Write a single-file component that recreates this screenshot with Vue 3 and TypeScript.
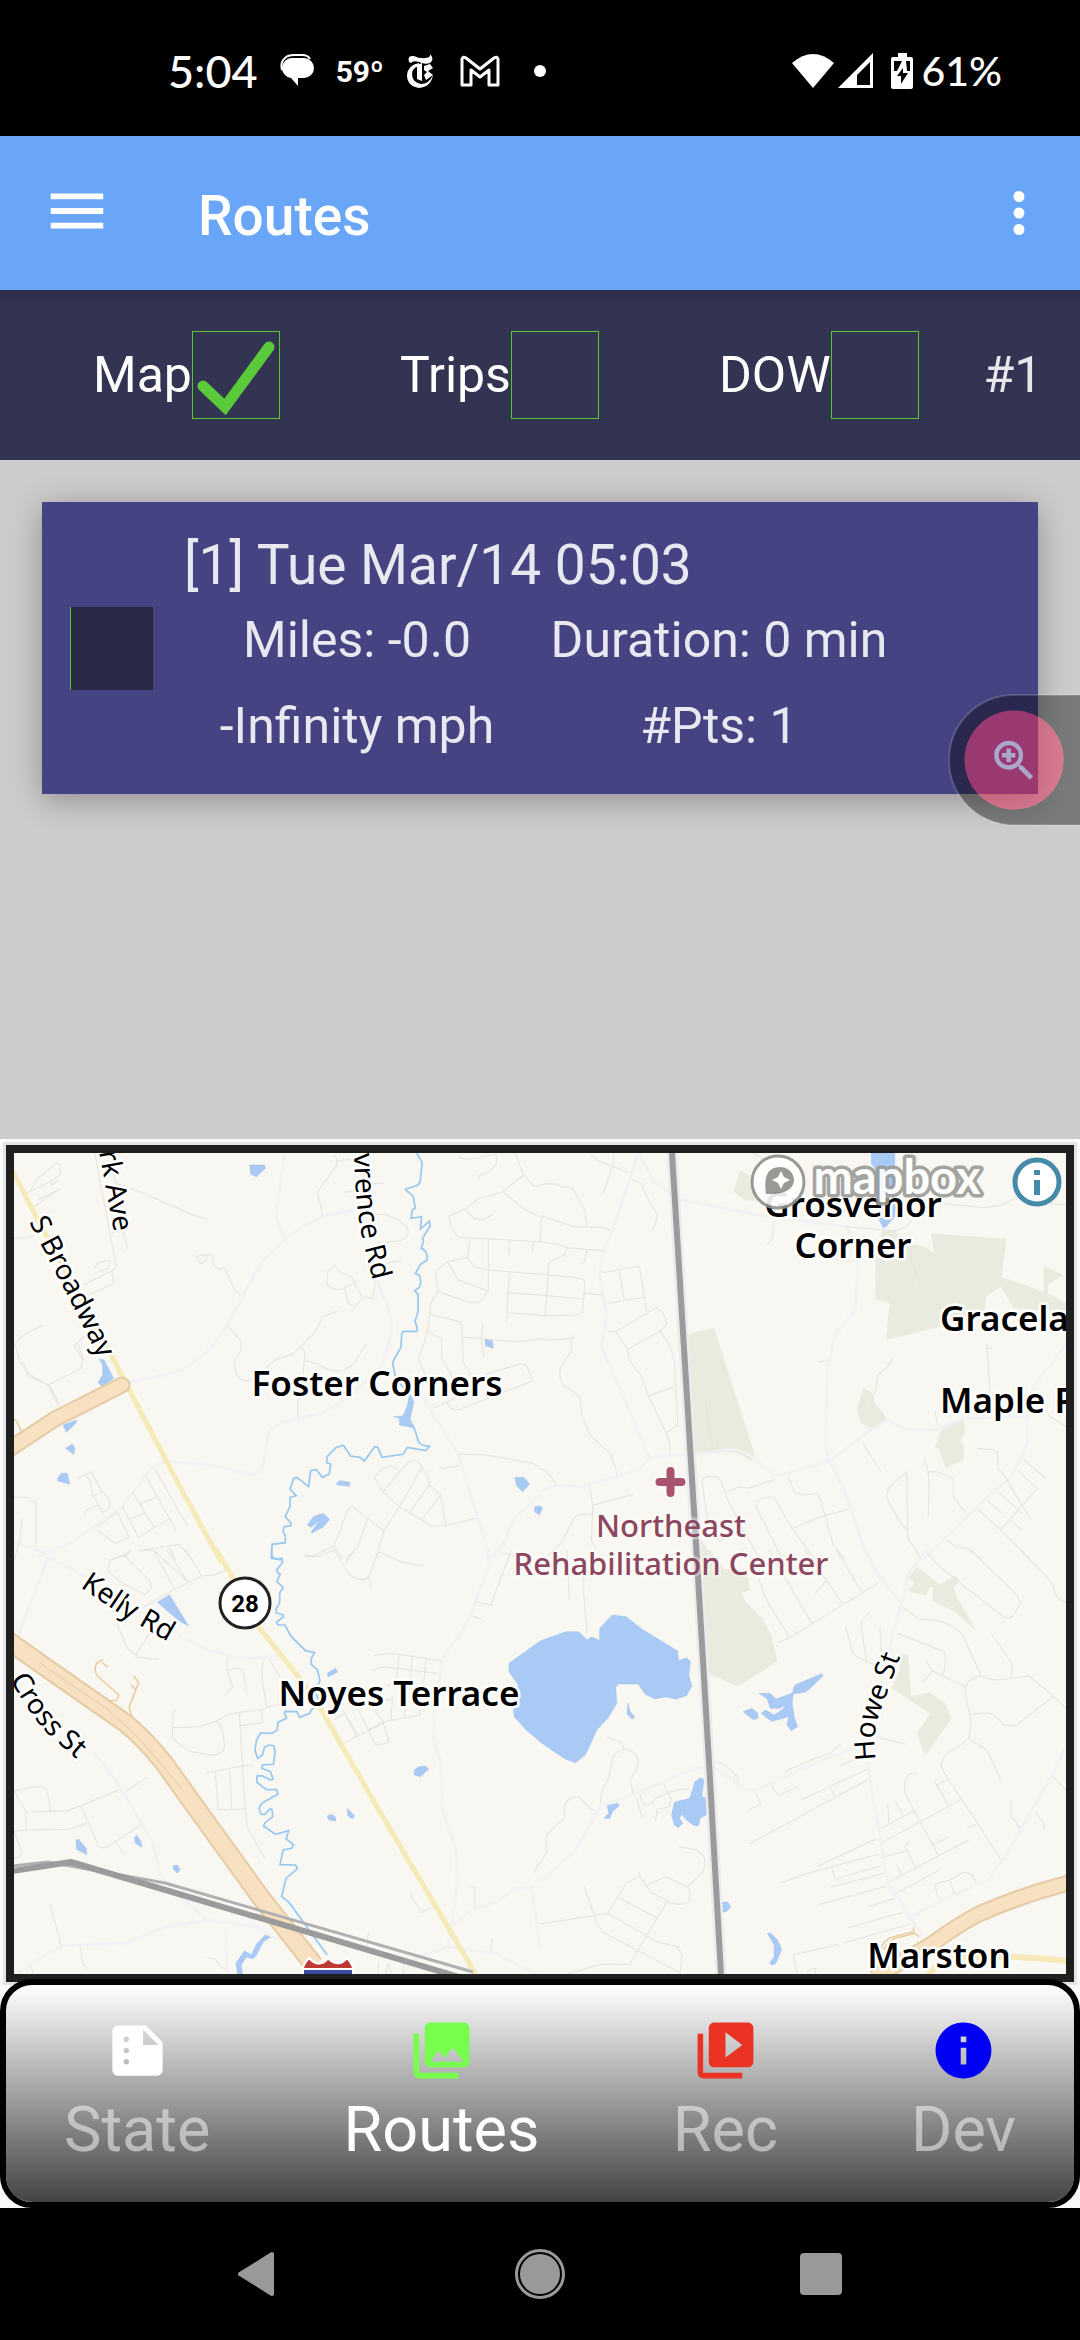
<script setup lang="ts">
import { ref } from 'vue'

interface Filter {
  id: string
  label: string
  on: boolean
}

interface Tab {
  id: string
  label: string
  color: string
  icon: string
}

interface Sheet {
  origin: string
  park: string
  street: string
  lane: string
  river: string
  water: string
  yellow: string
  track: string
}

interface Place {
  text: string
  x: number
  y: number
  anchor: 'start' | 'middle'
}

const filters = ref<Filter[]>([
  { id: 'map', label: 'Map', on: true },
  { id: 'trips', label: 'Trips', on: false },
  { id: 'dow', label: 'DOW', on: false },
])

const selected = ref(false)
const activeTab = ref('routes')

const stats: string[] = ['Miles: -0.0', 'Duration: 0 min', '-Infinity mph', '#Pts: 1']

const tabs: Tab[] = [
  {
    id: 'state',
    label: 'State',
    color: '#ffffff',
    icon: 'M15 3H5c-1.1 0-2 .9-2 2v14c0 1.100.9 2 2 2h14c1.100 0 2-.9 2-2V9l-6-6zM8 17c-.55 0-1-.45-1-1s.45-1 1-1 1 .45 1 1-.45 1-1 1zm0-4c-.55 0-1-.45-1-1s.45-1 1-1 1 .45 1 1-.45 1-1 1zm0-4c-.55 0-1-.45-1-1s.45-1 1-1 1 .45 1 1-.45 1-1 1zm6 1V4.500l5.500 5.500H14z',
  },
  {
    id: 'routes',
    label: 'Routes',
    color: '#76ff4c',
    icon: 'M22 16V4c0-1.100-.9-2-2-2H8c-1.100 0-2 .9-2 2v12c0 1.100.9 2 2 2h12c1.100 0 2-.9 2-2zm-11-4l2.030 2.710L16 11l4 5H8l3-4zM2 6v14c0 1.100.9 2 2 2h14v-2H4V6H2z',
  },
  {
    id: 'rec',
    label: 'Rec',
    color: '#eb3323',
    icon: 'M4 6H2v14c0 1.100.9 2 2 2h14v-2H4V6zm16-4H8c-1.100 0-2 .9-2 2v12c0 1.100.9 2 2 2h12c1.100 0 2-.9 2-2V4c0-1.100-.9-2-2-2zm-8 12.500v-9l6 4.500-6 4.500z',
  },
  {
    id: 'dev',
    label: 'Dev',
    color: '#0000f5',
    icon: 'M12 2C6.480 2 2 6.480 2 12s4.480 10 10 10 10-4.480 10-10S17.520 2 12 2zm1 15h-2v-6h2v6zm0-8h-2V7h2v2z',
  },
]

/* The map is drawn as four survey sheets that share one scale. */
const sheets: Sheet[] = [
  {
    origin: 'translate(-14 -23) scale(.34439 .33333)',
    park: '',
    street:
      'M275 69L335 395Q340 410 330 420L240 465M325 425L330 460L250 500M275 415L282 400L315 390L320 400L315 415L275 430M325 308L358 303L372 362M330 130L360 305M75 190L155 150L175 130V105Q165 95 158 105L105 150L90 180M145 150L150 165L170 150M110 210L175 175L100 230M335 160L400 182L560 255L605 268M41 325L80 323L110 310M125 585L75 610L41 640L60 700L85 740L140 765L170 830M140 765L235 715L240 690L215 645L250 615M225 640L243 690M65 695L85 732L145 770L175 825M663 587L700 635V660L680 695Q680 740 710 752Q730 757 745 735L800 690L850 672L875 648L910 612L938 560L980 543M875 652L885 665L882 715L865 820V865M882 690L925 702Q960 730 1000 720L1027 702L1062 642M570 385L580 375H615L622 408L635 417L655 415L680 480L698 497M570 385L583 402L600 390V375M965 80Q980 70 978 105L922 185L937 257M978 92L1020 88M1000 187L1030 182M1060 160H1115M1090 252Q1140 250 1180 290Q1195 315 1165 332L1095 338M950 425L970 405L985 425L1020 440L1050 500L1083 505L1090 450M950 425V462Q960 480 990 478L1045 452M1000 475L1012 520L1030 530L1052 505M1120 400L1170 392M1332 80Q1340 90 1380 85L1440 72L1442 100L1425 122L1390 138V150M1495 69L1520 135L1550 168H1568M1520 135L1460 185L1440 192L1390 205L1350 238L1303 258L1310 290L1330 322L1568 335M1350 238L1378 267H1405L1430 255M1460 185L1525 240L1568 260M1365 325L1358 385L1380 412L1418 420L1568 433M1418 325V480L1395 515L1365 518L1272 485L1250 522L1248 555L1240 610L1215 690L1240 745M1272 485L1265 425L1300 395L1360 380M1300 395L1330 450L1415 482M1478 330V375M1550 335L1545 365M1480 425L1470 575M1478 488L1568 495M1475 548L1568 555M1248 553L1335 575L1342 590L1345 695L1375 750M1245 607L1282 625V685L1330 770M1345 622L1420 628L1500 635L1568 628M1402 580L1398 630L1405 680M1375 745L1510 702L1528 705L1548 755M1258 835L1300 815L1350 790M1295 815L1310 835L1330 840L1540 755M1332 972L1410 975L1540 998L1568 1010M1275 1012L1290 1015L1332 1006M1088 1040Q1115 1005 1135 1008Q1150 1010 1160 1025M1088 1040L1110 1085L1160 1130L1225 1170L1250 1188L1295 1187L1380 1165M1160 1025L1195 988Q1215 990 1225 1012L1245 1045L1247 1065L1280 1095L1295 1187M1113 1085L1160 1025M1160 1130L1225 1012M1190 1145L1247 1065M1225 1168L1280 1095M970 1247L1010 1140L1023 1130L1068 1165L1115 1203L1090 1290M1068 1165L1040 1250L1003 1290M970 1247L995 1290M885 1277L905 1280L970 1247M1160 1130L1115 1203M41 1102H80L104 1118V1250M65 1163L58 1230L41 1290M223 1047L265 1025L290 1075L318 1110V1135L300 1148L270 1100L262 1050L245 1035M247 1155L250 1140L285 1125M270 1100L300 1085M425 1040L512 1203M450 1018L545 1190M385 1087L447 1193M355 1130L402 1222L495 1165M375 1168L420 1150L408 1120L460 1100M282 1190L340 1147L375 1222L335 1240L282 1200M320 1290L370 1275L380 1265M405 1263L520 1243L560 1290M490 1250L510 1290',
    lane:
      'M828 69L802 240Q802 290 830 328Q870 290 937 260L1060 232M830 328Q755 390 735 440L660 587Q600 690 500 730L370 757M1090 440L1128 535Q1142 580 1135 620L1105 715L1000 810L935 850L860 868Q800 880 780 905L768 980Q762 1030 735 1035L610 1005L500 995Q440 1000 430 1025L355 1130L210 1235L110 1280M1225 800L1330 970L1425 1290M41 1240L140 1270M1568 1095L1490 1170L1460 1245L1425 1290',
    river:
      'M1210 69L1226 98L1220 155L1214 165L1177 178L1200 200L1206 235L1197 240L1194 265L1224 260L1221 297L1247 273L1249 288L1227 325L1230 333L1223 355L1235 362L1241 380L1240 390L1222 402L1206 430L1219 437L1222 455L1218 472L1204 482L1214 493V545L1205 573L1212 597L1210 604H1172L1167 608L1164 652L1140 697L1150 750L1190 790L1185 860L1205 900L1215 935L1225 945L1247 949L1236 962L1183 952L1170 973L1109 982L1097 952L1088 950L1058 993L1045 982L1018 978L997 946L975 953L950 980L948 998L960 1002L956 1032L936 1042L918 1018L902 1022L896 1070L863 1043L853 1045L842 1077L860 1097L842 1102V1130L828 1160L845 1180V1187L825 1190L822 1205L829 1218L828 1238L790 1243L788 1285L818 1290',
    water:
      'M725 105H768L771 115L745 140L728 133ZM288 687L302 690L330 745L295 770L285 757L298 735V705ZM1190 790L1202 815L1188 880L1205 895L1160 885V865L1142 860L1170 858L1183 825ZM183 885L222 870L220 880L193 907ZM190 955L210 942L218 955L214 973ZM167 1045L178 1030L195 1030L203 1063L168 1053ZM1408 628L1430 632L1432 655L1410 647ZM978 1060L985 1052L1015 1056V1069L977 1064ZM892 1185L910 1160L938 1150L957 1168L940 1190L905 1210V1203L930 1170L903 1192ZM1495 1042H1520L1538 1062L1517 1085L1500 1067ZM1552 1130L1568 1128V1155L1552 1145Z',
    yellow: 'M35 120L105 260L330 690L530 1085L645 1300',
    track: 'M41 866Q55 880 62 908',
  },
  {
    origin: 'translate(526 -23) scale(.34439 .33333)',
    park:
      'M425 622L450 607L505 593L625 978L615 992L565 965L445 970ZM582 120L610 140L660 170L655 215L595 210L562 185ZM993 302L1030 300L1050 330L1115 350L1145 368L1135 310L1355 327L1340 440L1463 487V408L1520 435L1475 465V490L1527 520V545L1375 535L1338 470L1295 500L1290 560L1160 590L1005 630L1015 520L975 508L973 390ZM938 773L965 790L970 815L1005 868L962 895L932 880L920 840ZM1197 875L1230 860L1233 910L1220 930L1230 945V990L1177 1014L1160 958L1147 950L1163 905ZM458 1215L510 1290H462Z',
    street:
      'M142 69L170 93L258 127M213 69L215 95L182 193M265 150L295 160L305 190L338 250V275L325 305M0 165Q40 155 65 170L95 175L130 240L137 288M5 260L0 335L60 345L80 353L185 362M5 258L100 290L180 292L205 300M80 352L70 375L30 395L25 405L15 555M0 433L120 445L130 455L125 540Q122 552 105 555L0 558M0 495L125 507M137 360L130 395L120 402M130 490L180 495M182 428L288 408L310 545M230 418L245 512M195 520L305 502M193 604L220 605L255 658L355 600L368 580L358 550L338 533L220 605M255 658Q253 680 270 705L295 740L315 797L365 907L375 930L378 968M345 598L378 650L390 690L400 885L365 910M315 797L395 768M95 615V625L25 630L0 625M90 625L92 660L60 710Q52 745 70 768Q110 790 117 805L122 860L145 915L205 972L225 1035M0 1015L20 1025L45 1060M143 1070L153 1122L150 1235L165 1260M153 1125L220 1108L270 1092M150 1153H125Q100 1155 95 1170L65 1235L20 1280M620 69L660 95L700 130M1095 69V100M680 270L675 325L660 345M1160 220L1290 233L1340 225L1380 205L1420 190L1455 195L1490 222L1527 225M885 290L1035 302L1065 290L1080 270M1075 330L1078 390L1103 462M850 385L885 392L915 393M1297 640L1307 785M1297 655H1313M480 808L502 958M810 697L832 690M1025 683L1010 710L980 735L975 780L963 810L965 825L990 840L1003 868M1147 843L1155 887M937 938L990 1025M1268 955L1320 960L1328 965L1330 1015L1355 1045M1115 983L1127 1025L1130 1075L1127 1160M1125 1025H1155L1200 1047V1100L1235 1147M1475 855L1527 890M1405 990L1470 1045M1388 1023L1443 1075L1338 1200L1272 1138M1355 1048L1425 1170M1330 1085L1400 1150M1300 1113L1342 1150M1367 1172L1400 1200M1340 1202L1425 1290M1180 1228L1210 1252L1245 1256L1280 1290M1005 1095L1015 1070L1065 1025L1068 1225L1105 1285M1005 1095Q1020 1140 1068 1205M520 1232L485 1160L470 1050Q485 1035 510 1040Q525 1045 528 1060L545 1110L590 1200L640 1290M540 1085L575 1072L605 1074L682 1048M720 1040L740 1088L770 1095L805 1090L815 1110L850 1240L885 1290M630 1115Q655 1095 680 1102L735 1200L800 1290M630 1115V1135L705 1290M730 1197L802 1165L895 1137M520 1235L565 1200M600 1250L560 1290M1128 1273L1145 1290',
    lane:
      'M285 69L240 215L180 380Q170 430 180 480L195 560L178 650L255 830L318 985L285 1020L120 1070L50 1065L0 1085M285 69L330 150L390 205L650 258L890 290Q925 340 922 440L915 540L855 620L835 720L828 940L840 990L885 1085L945 1270M315 985L380 975L450 975L550 958Q600 960 640 1000L685 1040L845 990L960 900L1010 870L1060 897L1150 900L1230 865L1415 860L1440 760L1527 645M1415 860V940L1370 1040L1300 1100L1110 1290',
    river: '',
    water:
      'M962 69H1030V195H1040L1030 260L1005 290L997 294L985 270L990 250L970 215L975 120L962 100ZM0 1130L8 1133L0 1150Z',
    yellow: '',
    track: '',
  },
  {
    origin: 'translate(-14 397) scale(.34439 .33333)',
    park: '',
    street:
      'M320 30L360 15L437 95L440 115L420 133L365 105L320 70Q310 50 320 30M360 15L380 0M405 0L445 0L507 118L420 170M445 0L545 95M485 0L545 95M540 0L585 78M507 118L585 78L620 75L660 60M420 170L345 205L343 230L370 295L400 320L440 328L462 326M390 320L440 240M885 15L920 20L970 0L1015 75Q1055 100 1070 80L1100 5M1070 80L1078 115M1100 5L1165 35L1230 48M1030 0L1003 40M1485 0L1425 165L1385 157M1455 8L1495 20M1372 198L1400 208M660 320L658 355L675 410L655 435M665 360Q690 350 705 360L717 435M764 332L760 380L775 475M782 328L820 395M510 480L502 490L500 560Q520 590 560 605L610 615Q650 615 652 590Q650 540 630 512M500 533L575 530L625 515L665 492L758 478L820 460M758 478L763 517L695 528M695 490L710 750L718 830L768 925M597 670L705 647L737 646M625 665L633 780L710 777M667 660L673 778M1085 317L1137 310L1282 332M1080 360L1110 350L1270 370M1160 313L1150 400M1197 318L1190 400M1237 325L1230 400M1125 408L1140 400M1060 445L1140 450M1000 580L1035 560L1125 513L1218 495L1225 460M970 510L1000 490L1035 560M995 480L1040 555M1035 470L1060 520L1090 585L1130 578L1110 510L1085 480M1070 540L1115 515M1140 440L1135 510M1180 440L1175 500M41 722L115 708Q135 712 138 730L148 787M41 722L75 785V838M75 787L195 782L235 767L345 720M365 725L428 682M41 845L75 840L200 838L252 820M235 767L285 885Q295 898 310 892L408 825M41 845L65 907L55 922L41 925M338 878L362 916M145 1060L177 1187M232 1190L243 1247L255 1255M90 1250L98 1272M600 1222L625 1228L643 1252L655 1256M1190 1030L1225 1088L1257 1070M1365 1008L1378 1012V1070M1430 1165L1425 1205M1070 1145L1065 1185M1100 1235L1098 1272M1172 1240V1272M1120 1270L1128 1240L1135 1270M1568 935L1552 968',
    lane:
      'M140 20L100 130L55 250L41 330M140 20L250 80M515 255L600 298L690 322Q750 330 812 315M1415 0L1422 40L1372 180L1350 230L1285 325L1262 480L1258 560L1280 640L1285 780L1325 900L1328 1000L1310 1130L1300 1190L1170 1240M270 605L330 680L370 750L445 880L465 975L500 1015L600 1110L480 1130L370 1178L180 1187L100 1235L50 1272M600 1110L740 1128L800 1165L880 1170M655 1130L660 1272M1300 1190L1440 1210L1530 1260L1568 1272M1310 1130L1370 1080L1440 1055L1500 1015L1545 1010L1568 1200',
    river:
      'M788 0L790 23L808 27L818 25L821 37L803 60L808 70L814 72L804 95L822 112L812 130V157L802 177V188L823 195V200L803 217L808 225H827L846 260L887 302L914 308L904 325V343L922 360L929 392L915 425L930 460L903 480L900 490L870 502L862 485L828 484L826 490L832 505L807 517L805 540L790 550L757 549L745 570L740 600L748 625L762 615L768 592L780 585L795 587L799 605L794 643L762 645L760 655L785 665L793 687L786 690L760 677L746 678V697L774 719H803L807 732L760 760L752 775L758 792L768 794L785 776L790 780L792 800L770 818L765 828L800 853L838 842L831 867L852 884L847 895L822 900L813 944L858 945L864 956L830 985L818 1040L840 1058L950 1215',
    water:
      'M457 157L492 134L548 228L520 213ZM950 370L975 355L980 367L953 381ZM1203 660L1215 650L1235 648L1245 658L1220 680L1203 675ZM1008 775L1030 798L1023 806L1010 797ZM950 798L962 793L975 802V813L955 810ZM221 870L228 868L250 895L252 914L222 898ZM390 862L397 856L410 875L412 892L393 880ZM503 947L515 945L523 958L515 970L503 958ZM770 1155L785 1162L765 1175L745 1215L735 1226L715 1222L700 1245L705 1272H690L685 1240L710 1202L730 1215L745 1182Z',
    yellow: 'M625 -5L680 90L750 230L870 385L925 465L1100 780L1300 1130L1385 1280',
    track: 'M300 328L280 340Q270 360 285 380L345 435L338 452H318M297 338L314 351M388 378L403 398L375 470L382 500M380 403L395 420',
  },
  {
    origin: 'translate(526 397) scale(.34439 .33333)',
    park:
      'M462 0H495L535 57L600 60L610 120L585 130L600 160L645 205L672 255L689 335L575 409L485 370ZM1095 50L1160 103L1205 77L1218 92L1200 115L1215 150L1268 243L1205 185L1140 152L1142 110L1130 112L1120 137L1066 123L1088 100L1070 82ZM1045 312L1070 315L1077 440L1130 427L1175 458L1195 505L1118 618L1095 550L1132 492L1045 430L1020 415L1045 360Z',
    street:
      'M78 0L85 150M127 60V130L137 250M635 85L655 145L725 263L690 278M665 0L790 222M770 0L880 162M860 0L935 127M725 263L985 97M832 90L800 130M960 187Q935 200 932 225L948 333M887 225L908 310Q920 325 975 345M987 232L992 315M1055 172L1100 207L1160 213Q1210 230 1227 255L1280 375M1038 250L1175 305Q1182 330 1170 377M1122 333L1140 363L1110 397M1140 363L1235 410M1310 250L1370 340V382M1235 410L1245 393L1280 375Q1300 390 1330 390L1420 378L1490 437L1527 475M1235 410V430L1252 520L1245 565L1215 590L1180 610L1165 640Q1165 655 1180 680L1340 930M1250 493L1300 488Q1320 493 1348 525L1380 528L1490 440M1245 565L1300 603L1342 700M1125 10L1160 50L1345 200Q1362 210 1370 200L1396 160L1385 135L1250 0M1395 0L1485 95L1502 143L1527 158M1490 680L1527 720M195 560L215 570L235 575L243 597M175 760L180 725L200 680L212 620Q220 602 250 597Q280 605 285 630L282 655L262 690L270 730M280 740L297 803M0 940L18 910V855L70 805L72 765Q85 735 115 742L145 775L160 783M290 735L300 763L325 762L335 745L365 732L380 725Q410 715 435 718M360 703L382 750L375 770L340 778L335 815M500 633L535 643L575 680V697M560 685L568 675M672 708L692 737L748 710M605 780L640 762L627 730M712 670L715 662L800 625L845 608L870 585L877 595M870 648L910 630M757 750L950 658M607 882L950 690M842 712L857 742M975 560L1062 583M808 948L975 867M698 1000L770 972L985 912M845 950L857 987L990 948M842 1012L1000 970M808 1064L1008 1008M895 1133L1055 1087M953 1070L1030 1045M735 1215L870 1182M880 1180L1075 1122M748 1272L735 1215M985 838L1085 783M1010 760L1013 818M1032 753L1055 795M1095 673L1075 670L1060 690L1058 725L1085 780L1158 917M990 880L1222 748M1145 693L1185 765M1150 708L1185 688M1140 885L1187 860M1000 920L1062 903M1070 877L1060 890L1092 955M1015 995L1245 870M1035 945L1053 977M1035 1030L1160 960M1240 835L1270 820M1145 1003L1158 1047M1145 1003L1190 990L1230 967Q1255 965 1267 1000M1190 990L1202 1030M1368 750V798L1395 835M1437 782L1462 820V840M775 1270L785 1258L803 1255L797 1272M403 890L455 900Q485 920 478 945Q475 970 460 978L428 1012L370 982H360L308 1008L290 978L250 1000L197 1090L0 1122M308 1008L325 1028L385 1060Q420 1070 435 1048V1025L428 1012M285 965L292 978M228 1043L340 1104M370 1053L260 1243L178 1242L80 1272M197 1090L340 1175L400 1190L412 1215L407 1268L180 1145L165 1120L128 1010',
    lane:
      'M1125 0L1070 70L1050 160L1020 270L1010 330M945 0L985 80L1050 160M0 995L100 905L175 770L290 725L450 655L500 650L600 720Q620 728 650 710L800 640L905 595M950 620L960 700L990 880L1010 1000L1075 1100L1110 1160M1075 1100L1200 1035L1300 990L1345 930L1400 830L1490 670L1527 590',
    river: '',
    water:
      'M-90 340L0 273L75 245H112L137 270L150 260L173 272V235L210 195L250 200L300 240L400 303L402 332L425 323L437 335L432 375L441 408L425 437L395 447L365 441L333 447L305 432L285 402H228L220 412L223 460L200 500L165 540L133 613L103 638L75 628L45 608L0 575L-40 540L-75 500L-77 480L-63 405L-90 365ZM255 460L262 485L275 500L268 508L253 492ZM590 485L615 475L633 490V505L620 509ZM636 430H668L685 447L732 430L740 405L818 371L822 377L785 415L770 427L735 432L732 460L738 500L748 530L730 542L717 525L722 500L697 508L672 514L642 490L655 480L680 495L705 478L715 465L695 475H668L660 447ZM467 683L476 690L470 740L487 745V793L465 805L460 827L445 826L420 805L412 793L405 805L415 820L402 833L390 825L382 795L390 757L435 745L450 695ZM195 767L225 760L230 767L210 785L203 805H185L200 790ZM525 1056H545L554 1070L543 1084L525 1088ZM660 1150L670 1150L690 1170L702 1198L685 1240L672 1246L667 1238L680 1220V1185Z',
    yellow: '',
    track: 'M1085 1130V1145L1020 1162Q1000 1170 990 1195M1100 1160L1090 1150L1030 1165Q1010 1175 998 1200',
  },
]

const layers: Array<'park' | 'lane' | 'street' | 'river' | 'water' | 'yellow' | 'track'> = [
  'park',
  'lane',
  'street',
  'river',
  'water',
  'yellow',
  'track',
]

const places: Place[] = [
  { text: 'Grosvenor', x: 839, y: 64, anchor: 'middle' },
  { text: 'Corner', x: 839, y: 105, anchor: 'middle' },
  { text: 'Gracela', x: 926, y: 178, anchor: 'start' },
  { text: 'Maple P', x: 926, y: 260, anchor: 'start' },
  { text: 'Foster Corners', x: 363, y: 243, anchor: 'middle' },
  { text: 'Noyes Terrace', x: 385, y: 553, anchor: 'middle' },
  { text: 'Marston', x: 925, y: 815, anchor: 'middle' },
]

const roads = [
  { id: 'park-ave', name: 'rk Ave', d: 'M85 -1L104 100' },
  { id: 'broadway', name: 'S Broadway', d: 'M15 69L60 155L100 237' },
  { id: 'lawrence', name: 'vrence Rd', d: 'M340 0Q341 50 348 84L365 152' },
  { id: 'kelly', name: 'Kelly Rd', d: 'M66 434L109 463L191 510' },
  { id: 'cross', name: 'Cross St', d: 'M-4 526Q14 560 36 583Q52 597 90 629' },
  { id: 'howe', name: 'Howe St', d: 'M862 607Q857 580 868 554L892 488' },
]
</script>

<template>
  <div class="screen">
    <header class="status">
      <div class="status-left">
        <span class="clock">5:04</span>
        <svg class="chat" viewBox="0 0 34 34" aria-hidden="true">
          <path d="M2 16Q0 8 5 4Q8 1 14 1H22Q28 1 30 5" fill="none" stroke="#fff" stroke-width="2" />
          <path d="M13 4h11a10 10 0 0 1 0 20H18v8L11 24A10 10 0 0 1 13 4z" fill="#fff" />
        </svg>
        <span class="temp">59º</span>
        <svg class="times" viewBox="0 0 28 36" aria-hidden="true">
          <path d="M3 9Q1 2 8 3Q14 6 20 5Q25 4 24 1Q29 6 24 10Q19 12 13 9Q7 7 5 10Z" fill="#fff" />
          <path d="M13 10Q2 12 1 22Q1 33 13 35Q25 34 27 22Q23 31 15 31Q6 29 6 21Q6 15 13 13Z" fill="#fff" />
          <path d="M11 12V26L16 28V10zM18 13L24 11L27 15L22 18L27 22L20 27L18 22L21 19L18 17z" fill="#fff" />
        </svg>
        <svg class="mail" viewBox="0 0 40 32" aria-hidden="true">
          <path d="M2 30V4Q3 1 6 3L20 14L34 3Q37 1 38 4V30H29V15L20 22L11 15V30Z" fill="none" stroke="#fff" stroke-width="3" stroke-linejoin="round" />
        </svg>
        <span class="more-dot"></span>
      </div>
      <div class="status-right">
        <svg class="wifi" viewBox="0 0 42 36" aria-hidden="true">
          <path d="M0 10Q21 -8 42 10L21 35Z" fill="#fff" />
        </svg>
        <svg class="signal" viewBox="0 0 35 36" aria-hidden="true">
          <path d="M35 0V35H0ZM32 9L19 22V32H32Z" fill="#fff" fill-rule="evenodd" />
        </svg>
        <svg class="battery" viewBox="0 0 22 36" aria-hidden="true">
          <path d="M7 0h9v4h4q2 0 2 2v28q0 2-2 2H2q-2 0-2-2V6q0-2 2-2h5z" fill="#fff" />
          <path d="M3 8H11L6 18H3zM15 8H19V18H16zM12 15L6 23H10V31L17 20H12z" fill="#000" />
        </svg>
        <span class="charge">61%</span>
      </div>
    </header>

    <nav class="appbar">
      <button class="menu-button" type="button" aria-label="Menu">
        <svg class="menu-icon" viewBox="0 0 24 24"><path d="M3 18h18v-2H3v2zm0-5h18v-2H3v2zm0-7v2h18V6H3z" fill="#fff" /></svg>
      </button>
      <h1 class="title">Routes</h1>
      <button type="button" aria-label="More options">
        <svg class="more-icon" viewBox="0 0 24 24">
          <circle cx="12" cy="6" r="2" fill="#fff" /><circle cx="12" cy="12" r="2" fill="#fff" /><circle cx="12" cy="18" r="2" fill="#fff" />
        </svg>
      </button>
    </nav>

    <section class="filters">
      <label v-for="f in filters" :key="f.id" class="filter" :for="f.id">
        <span>{{ f.label }}</span>
        <span class="box">
          <input :id="f.id" v-model="f.on" class="tick" type="checkbox" />
          <svg v-if="f.on" class="mark" viewBox="0 0 88 88" aria-hidden="true">
            <path d="M11 55L33 76L77 16" fill="none" stroke="#5ac93a" stroke-width="11" stroke-linecap="round" />
          </svg>
        </span>
      </label>
      <span class="count">#1</span>
    </section>

    <main class="list">
      <article class="card">
        <input v-model="selected" class="pick" type="checkbox" aria-label="Select route 1" />
        <div class="card-body">
          <h2 class="card-title">[1] Tue Mar/14 05:03</h2>
          <div class="stats">
            <span v-for="s in stats" :key="s">{{ s }}</span>
          </div>
        </div>
      </article>
      <button class="zoom-fab" type="button" aria-label="Magnify">
        <svg viewBox="0 0 132 132">
          <path fill-rule="evenodd" d="M132 1H66A65 65 0 0 0 66 131H132ZM66 16.500a49.500 49.500 0 1 1 0 99a49.500 49.500 0 1 1 0-99z" fill="#000" fill-opacity=".4" />
          <path d="M132 1H66A65 65 0 0 0 66 131H132" fill="none" stroke="#fff" stroke-opacity=".16" stroke-width="2" />
          <circle cx="66" cy="66" r="49.500" fill="#e43260" fill-opacity=".53" />
          <g transform="translate(39.500 40) scale(2.230)" fill="#aaa7ca">
            <path d="M15.500 14h-.79l-.28-.27C15.410 12.590 16 11.110 16 9.500 16 5.910 13.090 3 9.500 3S3 5.910 3 9.500 5.910 16 9.500 16c1.610 0 3.090-.59 4.230-1.570l.27.28v.79l5 4.990L20.490 19l-4.990-5zm-6 0C7.010 14 5 11.990 5 9.500S7.010 5 9.500 5 14 7.010 14 9.500 11.990 14 9.500 14zM12.500 10.500h-2v2h-2v-2h-2v-2h2v-2h2v2h2z" />
          </g>
        </svg>
      </button>
    </main>

    <section class="map-outer" aria-label="Map">
      <svg class="map" viewBox="0 0 1052 821">
        <rect width="1052" height="821" fill="#f8f7f1" />
        <g v-for="layer in layers" :key="layer" :class="layer">
          <path v-for="s in sheets" :key="s.origin" :transform="s.origin" :d="s[layer]" />
        </g>

        <g fill="none" stroke-linejoin="round">
          <path d="M1055 730Q1010 741 965 761Q945 771 918 791Q880 813 860 825" stroke="#e5cba5" stroke-width="17" />
          <path d="M1055 730Q1010 741 965 761Q945 771 918 791Q880 813 860 825" stroke="#f7e1c0" stroke-width="13" />
          <path d="M912 825Q925 806 950 804Q1000 802 1055 808" stroke="#f6eab8" stroke-width="6" />
          <path d="M-6 297L41 266L108 232" stroke="#e5cba5" stroke-width="17" stroke-linecap="round" />
          <path d="M-6 297L41 266L108 232" stroke="#f7e1c0" stroke-width="13" stroke-linecap="round" />
          <path d="M-7 487L64 537L110 569Q130 585 150 610L180 652L248 746L300 812" stroke="#e5cba5" stroke-width="20" />
          <path d="M-7 487L64 537L110 569Q130 585 150 610L180 652L248 746L300 812" stroke="#f7e1c0" stroke-width="16" />
          <path d="M26 510L93 556Q125 584 140 603L168 636" stroke="#e5cba5" stroke-width="1" />
          <path d="M-2 713L34 709L151 730L459 819" stroke="#b0b0b0" stroke-width="3" />
          <path d="M-2 718L57 709L445 824" stroke="#9b9b9b" stroke-width="6" />
          <path d="M658 0L683 407L695 609L707 821" stroke="#ececef" stroke-width="11" />
          <path d="M658 0L683 407L695 609L707 821" stroke="#9b9b9b" stroke-width="6" />
        </g>

        <g class="place">
          <text v-for="p in places" :key="p.text" :x="p.x" :y="p.y" :text-anchor="p.anchor">{{ p.text }}</text>
        </g>

        <defs>
          <path v-for="r in roads" :id="r.id" :key="r.id" :d="r.d" />
        </defs>
        <text v-for="r in roads" :key="r.id" class="road">
          <textPath :href="'#' + r.id">{{ r.name }}</textPath>
        </text>

        <path d="M656.500 319V339M646.500 329H666.500" stroke="#fff" stroke-width="13" stroke-linecap="round" />
        <path d="M656.500 318V340M645.500 329H667.500" stroke="#a9536f" stroke-width="8" stroke-linecap="round" />
        <g class="hospital">
          <text x="657" y="384" text-anchor="middle">Northeast</text>
          <text x="657" y="422" text-anchor="middle">Rehabilitation Center</text>
        </g>

        <circle cx="231" cy="450" r="25" fill="#fff" stroke="#222" stroke-width="3" />
        <text class="shield" x="231" y="459" text-anchor="middle">28</text>
        <path d="M288 821Q288 812 295 805Q301 812 307 810Q311 810 314 805Q318 810 322 810Q328 811 333 805Q340 812 340 821Z" fill="#be3a34" stroke="#fff" stroke-width="2" />
        <rect x="289" y="815" width="50" height="6" fill="#fff" />
        <rect x="290" y="817" width="48" height="4" fill="#3a4ba0" />

        <g class="logo">
          <circle cx="764" cy="29" r="26" fill="#fff" stroke="#8f8f8c" stroke-width="3" />
          <path d="M752 41Q748 14 766 14A14 14 0 0 1 780 26Q780 42 752 41ZM767 18L764 24L758 27L764 30L767 36L770 30L776 27L770 24Z" fill="#8f8f8c" fill-rule="evenodd" />
          <text class="wordmark" x="883" y="41" text-anchor="middle">mapbox</text>
        </g>
        <circle cx="1023" cy="29" r="22" fill="#fff" stroke="#458ba9" stroke-width="5" />
        <path d="M1023 17V22M1023 27V42" stroke="#458ba9" stroke-width="6" />
      </svg>
    </section>

    <nav class="tabs">
      <button
        v-for="t in tabs"
        :key="t.id"
        type="button"
        class="tab"
        :class="{ active: t.id === activeTab }"
        @click="activeTab = t.id"
      >
        <svg class="tab-icon" viewBox="0 0 24 24" aria-hidden="true"><path :d="t.icon" :fill="t.color" fill-rule="evenodd" /></svg>
        <span>{{ t.label }}</span>
      </button>
    </nav>

    <footer class="system">
      <button type="button" aria-label="Back">
        <svg viewBox="0 0 50 50"><path d="M6 25L38 5V45Z" fill="#999" stroke="#999" stroke-width="4" stroke-linejoin="round" /></svg>
      </button>
      <button type="button" aria-label="Home">
        <svg viewBox="0 0 50 50">
          <circle cx="25" cy="25" r="23.500" fill="none" stroke="#999" stroke-width="3" /><circle cx="25" cy="25" r="20" fill="#999" />
        </svg>
      </button>
      <button type="button" aria-label="Recent apps">
        <svg viewBox="0 0 50 50"><rect x="4" y="4" width="42" height="42" rx="4" fill="#999" /></svg>
      </button>
    </footer>
  </div>
</template>

<style>
body {
  margin: 0;
  background: #fafafa;
}
</style>

<style scoped>
.screen {
  display: flex;
  flex-direction: column;
  min-height: 100vh;
  overflow: hidden;
  background: #fafafa;
  font-family: Roboto, 'Noto Sans', sans-serif;
}

button {
  padding: 0;
  border: 0;
  background: none;
  font: inherit;
}

svg {
  display: block;
}

.status {
  display: flex;
  justify-content: space-between;
  align-items: center;
  box-sizing: border-box;
  height: 136px;
  padding: 6px 78px 0 168px;
  background: #000;
  color: #fff;
}

.status-left,
.status-right {
  display: flex;
  align-items: center;
}

.clock,
.charge {
  font-family: Lato, sans-serif;
  font-weight: 500;
  line-height: 52px;
}

.clock {
  font-size: 45px;
}

.charge {
  font-size: 41px;
}

.chat {
  width: 34px;
  height: 34px;
  margin-left: 22px;
}

.temp {
  margin-left: 22px;
  font-family: 'Liberation Sans Narrow', Roboto, sans-serif;
  font-size: 30px;
  font-weight: 700;
}

.times {
  width: 28px;
  height: 36px;
  margin-left: 22px;
}

.mail {
  width: 40px;
  height: 32px;
  margin-left: 26px;
}

.more-dot {
  width: 12px;
  height: 12px;
  margin-left: 34px;
  border-radius: 50%;
  background: #fff;
}

.wifi {
  width: 42px;
  height: 36px;
}

.signal {
  width: 35px;
  height: 36px;
  margin-left: 4px;
}

.battery {
  width: 22px;
  height: 36px;
  margin: 0 8px 0 18px;
}

.appbar {
  display: flex;
  align-items: center;
  box-sizing: border-box;
  height: 154px;
  padding: 0 28px 0 42px;
  background: #6aa6f8;
  color: #fff;
}

.menu-button {
  padding-bottom: 4px;
}

.menu-icon {
  width: 70px;
  height: 70px;
}

.more-icon {
  width: 66px;
  height: 66px;
}

.title {
  flex: 1;
  margin: 0;
  padding: 6px 0 0 86px;
  font-size: 55px;
  font-weight: 500;
  line-height: 64px;
}

.filters {
  display: flex;
  align-items: center;
  box-sizing: border-box;
  height: 170px;
  padding-left: 93px;
  background: linear-gradient(#2d2b49, #333352 16px);
  color: #fff;
  font-size: 50px;
}

.filter {
  display: flex;
  align-items: center;
  margin-right: 120px;
}

.box {
  display: grid;
  width: 88px;
  height: 88px;
}

.tick {
  grid-area: 1 / 1;
  width: 88px;
  height: 88px;
  margin: 0;
  appearance: none;
  border: 1px solid #56c72e;
}

.mark {
  grid-area: 1 / 1;
  pointer-events: none;
}

.count {
  margin-left: -55px;
  color: #e6e6ec;
}

.list {
  position: relative;
  flex: 1;
  padding: 42px;
  background: #ccc;
}

.card {
  display: flex;
  align-items: center;
  box-sizing: border-box;
  min-height: 292px;
  padding-left: 28px;
  background: #464382;
  box-shadow: 0 6px 30px rgba(0, 0, 0, 0.3);
  color: #e8e8f0;
}

.pick {
  flex: none;
  width: 83px;
  height: 83px;
  margin: 0;
  appearance: none;
  border-left: 1px solid #56c72e;
  background: #2a2945;
}

.card-body {
  width: 724px;
  margin-left: 23px;
  padding-top: 6px;
}

.card-title {
  margin: 0;
  padding: 0 8px;
  font-size: 55px;
  font-weight: 400;
  line-height: 64px;
}

.stats {
  display: grid;
  grid-template-columns: 1fr 1fr;
  font-size: 50px;
  line-height: 86px;
  text-align: center;
}

.zoom-fab {
  position: absolute;
  top: 234px;
  right: 0;
  width: 132px;
  height: 132px;
}

.map-outer {
  margin: 3px 3px 0;
  padding: 8px;
  border: 3px solid #e4e4e4;
  background: #1e1f1e;
}

.map {
  width: 100%;
  overflow: hidden;
}

.park path {
  fill: #e8ebdd;
}

.lane path {
  fill: none;
  stroke: #f2f2f4;
  stroke-width: 9;
}

.street path {
  fill: none;
  stroke: #e3e3e2;
  stroke-width: 3;
}

.river path {
  fill: none;
  stroke: #97c8f2;
  stroke-width: 5;
}

.water path {
  fill: #a9caf5;
  stroke: #8db4ee;
  stroke-width: 1;
}

.yellow path {
  fill: none;
  stroke: #f6eab8;
  stroke-width: 15;
}

.track path {
  fill: none;
  stroke: #e9c998;
  stroke-width: 4;
}

.place,
.road,
.hospital {
  font-family: 'Noto Sans', 'Open Sans', sans-serif;
  stroke: #fff;
  stroke-width: 5px;
  stroke-linejoin: round;
  paint-order: stroke;
}

.place {
  font-size: 35px;
  font-weight: 600;
}

.road {
  font-size: 28px;
}

.hospital {
  fill: #8d4660;
  stroke-opacity: 0.4;
  font-size: 31px;
  font-weight: 500;
}

.shield {
  font-family: Roboto, sans-serif;
  font-size: 24px;
  font-weight: 700;
}

.logo {
  opacity: 0.9;
}

.wordmark {
  fill: #fff;
  stroke: #9b9b98;
  stroke-width: 7px;
  stroke-linejoin: round;
  paint-order: stroke;
  font-family: Lato, sans-serif;
  font-size: 47px;
  font-weight: 700;
}

.tabs {
  position: relative;
  display: flex;
  justify-content: space-between;
  box-sizing: border-box;
  height: 229px;
  margin-top: -6px;
  padding: 32px 58px 0;
  border: 6px solid #000;
  border-radius: 32px;
  background: linear-gradient(#fff, #444) padding-box;
}

.tab {
  display: flex;
  flex-direction: column;
  align-items: center;
  color: rgba(255, 255, 255, 0.5);
  font-size: 63px;
  line-height: 76px;
}

.tab.active {
  color: #fff;
}

.tab-icon {
  width: 67px;
  height: 67px;
  margin-bottom: 8px;
}

.system {
  display: flex;
  justify-content: center;
  align-items: center;
  gap: 231px;
  height: 132px;
  background: #000;
}

.system svg {
  width: 50px;
  height: 50px;
}
</style>
